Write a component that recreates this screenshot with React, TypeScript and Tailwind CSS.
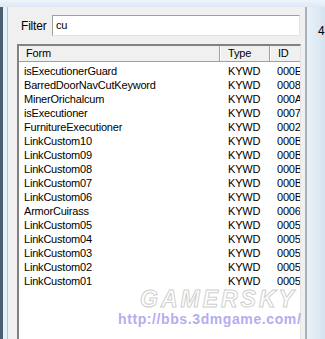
const rows = [
  ['isExecutionerGuard', 'KYWD', '000E'],
  ['BarredDoorNavCutKeyword', 'KYWD', '0008'],
  ['MinerOrichalcum', 'KYWD', '000A'],
  ['isExecutioner', 'KYWD', '0007'],
  ['FurnitureExecutioner', 'KYWD', '0002'],
  ['LinkCustom10', 'KYWD', '000B'],
  ['LinkCustom09', 'KYWD', '000B'],
  ['LinkCustom08', 'KYWD', '000B'],
  ['LinkCustom07', 'KYWD', '000B'],
  ['LinkCustom06', 'KYWD', '000B'],
  ['ArmorCuirass', 'KYWD', '0006'],
  ['LinkCustom05', 'KYWD', '0005'],
  ['LinkCustom04', 'KYWD', '0005'],
  ['LinkCustom03', 'KYWD', '0005'],
  ['LinkCustom02', 'KYWD', '0005'],
  ['LinkCustom01', 'KYWD', '0005'],
]

export default function App() {
  return (
    <div
      className="relative w-[325px] h-[339px] overflow-hidden flex flex-col bg-[#dfeaf4] text-black text-[11px] tracking-[-0.2px]"
      style={{ fontFamily: '"Liberation Sans", Arial, sans-serif' }}
    >
      <div className="h-[7px] flex-none bg-gradient-to-b from-[#eef5fb] to-[#dce9f5]" />
      <div className="flex flex-1 min-h-0">
        {/* left window frame */}
        <div className="w-[3px] bg-[#4b5f70]" />
        <div className="w-[5px] bg-[#e4f2fb] border-r border-[#b9c6d1]" />

        {/* dialog panel */}
        <div className="w-[297px] bg-[#f0f0f0] flex flex-col pl-[9px] pr-[4px] pt-[8px]">
          <div className="flex items-center h-[21px]">
            <span className="w-[35px] pl-[4px] text-[12px]">Filter</span>
            <div className="flex-1 h-[21px] bg-white border border-t-[#a0a0a0] border-l-[#a0a0a0] border-r-[#e3e3e3] border-b-[#e3e3e3] flex items-center pl-[3px] mr-[1px]">
              cu
            </div>
          </div>

          <div className="mt-[8px] flex-1 bg-white border-l-2 border-t-2 border-l-[#828282] border-t-[#828282] border-r border-r-[#e3e3e3] flex flex-col overflow-hidden">
            <div className="flex h-[16px] flex-none bg-[#f0f0f0] border-b border-[#a0a0a0]">
              <div className="w-[201px] pl-[6px] border-r border-[#a0a0a0] border-l border-l-white flex items-center">Form</div>
              <div className="w-[50px] pl-[7px] border-r border-[#a0a0a0] border-l border-l-white flex items-center">Type</div>
              <div className="flex-1 pl-[7px] border-l border-l-white flex items-center">ID</div>
            </div>
            <div className="pt-[2px] flex flex-col">
              {rows.map(([form, type, id]) => (
                <div key={form} className="flex h-[14px] items-center">
                  <div className="w-[201px] pl-[5px] whitespace-nowrap">{form}</div>
                  <div className="w-[50px] pl-[8px]">{type}</div>
                  <div className="flex-1 pl-[7px] overflow-hidden whitespace-nowrap">{id}</div>
                </div>
              ))}
            </div>
          </div>
        </div>

        {/* right edge of window */}
        <div className="w-[2px] bg-[#a9b3bc]" />
        <div className="flex-1 bg-gradient-to-r from-[#e8f1f8] to-[#d6e4f0] pt-[15px] pl-[11px] text-[12px]">4</div>
      </div>

      {/* watermark */}
      <div
        className="absolute left-[140px] top-[289px] leading-[21px] text-[23px] font-bold italic tracking-[3px] text-white/50"
        style={{ WebkitTextStroke: '1px #cfcfcf' }}
      >
        GAMERSKY
      </div>
      <div className="absolute left-[118px] top-[312px] leading-[15px] text-[14px] font-bold tracking-[0.6px] text-[#b4adf0]">
        http://bbs.3dmgame.com/
      </div>
    </div>
  )
}
